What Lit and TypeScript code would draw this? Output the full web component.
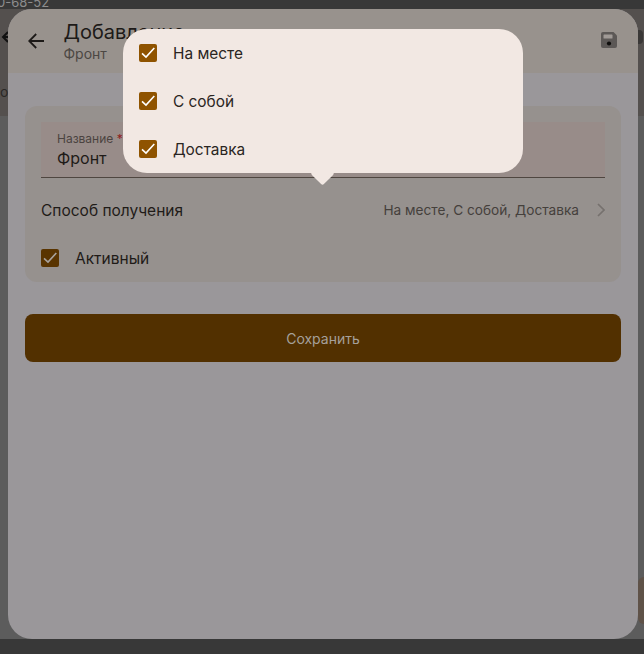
import { LitElement, html, css, svg } from "lit";
import { customElement } from "lit/decorators.js";

const check = (stroke: string) => svg`<svg class="tick" viewBox="0 0 18 18" width="18" height="18"><path d="M3 9.300 7 13 15.300 4" fill="none" stroke=${stroke} stroke-width="1.600"/></svg>`;

@customElement("app-root")
export class AppRoot extends LitElement {
  static styles = css`
    :host {
      display: block;
      position: relative;
      width: 644px;
      height: 654px;
      overflow: hidden;
      background: #5c5c5c;
      font-family: Inter, "Noto Sans", sans-serif;
      color: #1f1b18;
    }
    .page { position: relative; display: flex; flex-direction: column; height: 654px; }
    .status {
      height: 9px; flex: none; background: #383838; color: #8d8d8d;
      font-size: 13px; line-height: 9px; overflow: hidden; white-space: nowrap;
    }
    .status span { display: block; margin-left: -3px; margin-top: -4px; line-height: 13px; }
    .stage { flex: 1; display: flex; padding: 0 6px 0 8px; min-height: 0; }
    .foot { height: 15px; flex: none; background: #383838; }
    .behind-head {
      position: absolute; left: 0; top: 9px; width: 644px; height: 107px;
      background: #54504e;
    }
    .behind-arrow { position: absolute; left: 1px; top: 18px; }
    .behind-o { position: absolute; left: 0; top: 74px; font-size: 14px; line-height: 17px; color: #2a2826; }
    .behind-save {
      position: absolute; right: 1px; top: 21px; width: 5px; height: 14px;
      background: #3a3837; border-radius: 0 4px 4px 0;
    }
    .behind-corner {
      position: absolute; right: 0; top: 577px; width: 6px; height: 47px;
      background: #5f5248; border-radius: 10px 0 0 10px;
    }
    .modal {
      position: relative; flex: 1; display: flex; flex-direction: column;
      background: #9a979a; border-radius: 24px; overflow: hidden;
    }
    .header {
      flex: none; height: 64px; background: #98928d;
      display: flex; align-items: flex-start; box-sizing: border-box; padding: 11px 21px 0 20px; gap: 20px;
    }
    .back { margin-top: 13px; flex: none; }
    .titles { flex: 1; margin-left: -0.5px; }
    .title { font-size: 20px; line-height: 24px; color: #1d1a18; }
    .sub { font-size: 14px; line-height: 17px; color: #4c4743; margin-top: 1px; }
    .save { margin-top: 12px; flex: none; }
    .body { padding: 33px 17px 0 17px; display: flex; flex-direction: column; gap: 32px; }
    .card {
      background: #96918e; border-radius: 12px; padding: 16px 16px 0; height: 176px; box-sizing: border-box;
      display: flex; flex-direction: column;
    }
    .field {
      height: 56px; box-sizing: border-box; flex: none; background: #988c89;
      border-bottom: 1px solid #4f4640; padding: 9px 16px 0;
    }
    .label { font-size: 12px; line-height: 15px; color: #4b4340; }
    .label b { color: #8f1c1c; font-weight: 400; }
    .value { font-size: 16px; line-height: 20px; color: #1f1b18; margin-top: 2px; }
    .row {
      height: 48px; flex: none; display: flex; align-items: center; justify-content: space-between;
      font-size: 15.5px; color: #1f1b18; margin-top: 8px;
    }
    .row .right { display: flex; align-items: center; gap: 16px; font-size: 13.65px; color: #45403c; }
    .activ { height: 48px; flex: none; display: flex; align-items: center; gap: 16px; font-size: 15.5px; color: #1f1b18; }
    .box {
      width: 18px; height: 18px; border-radius: 2px; flex: none; display: block;
    }
    .box.dim { background: #593400; }
    .box.lit { background: #8f5300; }
    .tick { display: block; }
    .btn {
      height: 48px; background: #523000; border-radius: 8px; color: #a5a09b;
      display: flex; align-items: center; justify-content: center; font-size: 14px;
    }
    .popup {
      position: absolute; left: 123px; top: 29px; width: 400px; height: 144px;
      background: #f2e8e3; border-radius: 24px; display: flex; flex-direction: column;
    }
    .popup::after {
      content: ""; position: absolute; left: 190.5px; top: 135.5px; width: 17px; height: 17px;
      background: #f2e8e3; transform: rotate(45deg); border-radius: 2px;
    }
    .opt { height: 48px; display: flex; align-items: center; gap: 16px; padding-left: 16px; font-size: 15.4px; color: #2a2522; }
  `;

  render() {
    return html`
      <div class="behind-head">
        <svg class="behind-arrow" width="10" height="20" viewBox="0 0 10 20"><path d="M9 10H2M7 5l-5 5 5 5" fill="none" stroke="#111" stroke-width="2"/></svg>
        <div class="behind-o">о</div>
        <div class="behind-save"></div>
      </div>
      <div class="behind-corner"></div>
      <div class="page">
        <div class="status"><span>0-68-52</span></div>
        <div class="stage">
          <div class="modal">
            <div class="header">
              <svg class="back" width="16" height="16" viewBox="0 0 16 16"><path d="M16 8H1.500M8.200 1 1.200 8l7 7" fill="none" stroke="#1d1a18" stroke-width="1.800"/></svg>
              <div class="titles">
                <div class="title">Добавление</div>
                <div class="sub">Фронт</div>
              </div>
              <svg class="save" width="16" height="16" viewBox="0 0 16 16">
                <path d="M2 0h10.500L16 3.500V14a2 2 0 0 1-2 2H2a2 2 0 0 1-2-2V2a2 2 0 0 1 2-2z" fill="#5c5856"/>
                <rect x="2.500" y="2.500" width="9" height="4" rx=".6" fill="#a09a96"/>
                <circle cx="8" cy="11.500" r="2.100" fill="#0f0e0d"/>
              </svg>
            </div>
            <div class="body">
              <div class="card">
                <div class="field">
                  <div class="label">Название <b>*</b></div>
                  <div class="value">Фронт</div>
                </div>
                <div class="row">
                  <span>Способ получения</span>
                  <span class="right">На месте, С собой, Доставка
                    <svg width="10" height="14" viewBox="0 0 10 14"><path d="M3 1 9 7l-6 6" fill="none" stroke="#76716e" stroke-width="1.700"/></svg>
                  </span>
                </div>
                <div class="activ"><span class="box dim">${check("#a8a29c")}</span>Активный</div>
              </div>
              <div class="btn">Сохранить</div>
            </div>
          </div>
        </div>
        <div class="foot"></div>
      </div>
      <div class="popup">
        <div class="opt"><span class="box lit">${check("#ffffff")}</span>На месте</div>
        <div class="opt"><span class="box lit">${check("#ffffff")}</span>С собой</div>
        <div class="opt"><span class="box lit">${check("#ffffff")}</span>Доставка</div>
      </div>
    `;
  }
}
